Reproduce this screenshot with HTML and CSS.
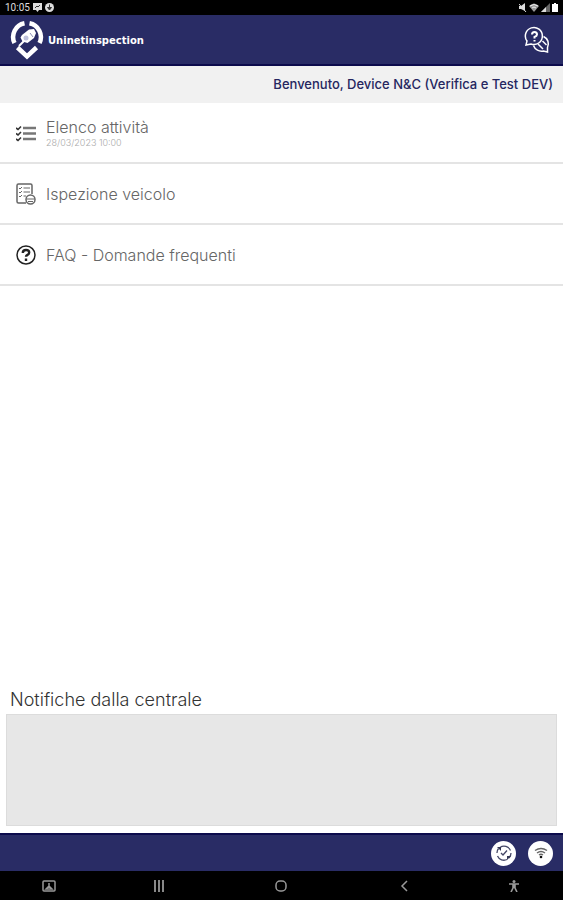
FILE: index.html
```
<!DOCTYPE html>
<html lang="it">
  <head>
    <meta charset="utf-8">
    <meta name="viewport" content="width=device-width,initial-scale=1.0">
    <title>Uninetinspection</title>
    <link rel="stylesheet" href="styles.css">
  </head>
  <body>
    <!-- android status bar -->
    <div class="status-bar">
      <span class="clock">10:05</span>
      <svg width="9" height="9" viewBox="0 0 9 9"><path d="M0 0h9v7H6L4.500 9 3 7H0z" fill="#ddd"/><path d="M2 5l2-2 1 1 2-2" stroke="#333" fill="none"/></svg>
      <svg width="9" height="9" viewBox="0 0 9 9"><circle cx="4.500" cy="4.500" r="4.500" fill="#ddd"/><path d="M4.500 1.500v3M2.500 4.500h4L4.500 7z" stroke="#333" fill="#333"/></svg>
      <div class="status-right">
        <svg width="8" height="9" viewBox="0 0 8 9"><path d="M0 3h2l4-3v8L2 6H0z" fill="#ddd"/><path d="M0 1l7 8" stroke="#ddd"/></svg>
        <svg width="10" height="9" viewBox="0 0 10 9"><path d="M0 3q5-5 10 0L5 9z" fill="#999"/><path d="M1 3q4-3 8 0M3 5q2-2 4 0" stroke="#eee" fill="none"/></svg>
        <svg width="9" height="9" viewBox="0 0 9 9"><path d="M0 9l9-9v9z" fill="#666"/><path d="M0 9l5-5v5z" fill="#ddd"/></svg>
        <svg width="6" height="9" viewBox="0 0 6 9"><path d="M2 0h2v1h2v8H0V1h2z" fill="#fff"/></svg>
      </div>
    </div>

    <header class="app-header">
      <svg class="logo" width="34" height="40" viewBox="0 0 34 40">
        <g fill="none" stroke="#fff" stroke-width="4.500">
          <path d="M14.500 3.200A14 14 0 0 0 4.500 23"/>
          <path d="M19.500 3.200A14 14 0 0 1 29.500 23"/>
          <path d="M7.500 27.500L17 36.500l9.500-9"/>
        </g>
        <path d="M12 15l7-5.500 5-.500 2 4-2 5-6.500 5-5-1.500-2-4z" fill="#fff"/>
        <circle cx="16" cy="18" r="2.500" fill="#bfc2dc"/>
        <path d="M14 21l-5 5" stroke="#fff" stroke-width="2"/>
        <path d="M20 13l3 4" stroke="#8c8fb8"/>
      </svg>
      <h1 class="brand">Uninetinspection</h1>
      <button class="help-btn" aria-label="Aiuto">
        <svg width="28" height="28" viewBox="0 0 28 28" fill="none" stroke="#fff" stroke-width="1.500">
          <path d="M3 19l1-4a8.500 8.500 0 1 1 4 3z"/>
          <path d="M20.500 10.500a8 8 0 0 1 4 11v4.500l-4-1a8.500 8.500 0 0 1-10-5.500"/>
          <path d="M19.500 15l4 4M15 18l5 5"/>
          <path d="M9 8.500q0-2.500 2.500-2.500T14 8.500q0 1.500-2.500 2.500v1.500M11.500 14v1.500" stroke-width="2"/>
        </svg>
      </button>
    </header>

    <p class="welcome">Benvenuto, Device N&amp;C (Verifica e Test DEV)</p>

    <main class="content">
      <nav class="menu">
        <a class="menu-item" href="#attivita">
          <svg width="20" height="20" viewBox="0 0 20 20" fill="none" stroke="#333">
            <path d="M7 5h13M7 10.500h13M7 16h13" stroke="#777" stroke-width="2.400"/>
            <path d="M0 5l2 1.500L5 3.500M0 10.500l2 1.500L5 9M0 16l2 1.500L5 14.500" stroke-width="1.600"/>
          </svg>
          <span class="menu-text">Elenco attività<small class="menu-date">28/03/2023 10:00</small></span>
        </a>
        <a class="menu-item" href="#ispezione">
          <svg width="20" height="22" viewBox="0 0 20 22" fill="none" stroke="#666">
            <path d="M10 20H2.500Q1 20 1 18.500v-16Q1 1 2.500 1h12Q16 1 16 2.500V11" stroke-width="1.500"/>
            <path d="M3 5l1 1 2-2M3 9l1 1 2-2M3 13l1 1 2-2M7.500 5H14M7.500 9H14M7.500 13H10"/>
            <circle cx="14.500" cy="16.500" r="4.500" stroke-width="1.500"/>
            <path d="M10.500 16h8M12 18.500h5"/>
          </svg>
          <span class="menu-text">Ispezione veicolo</span>
        </a>
        <a class="menu-item" href="#faq">
          <svg width="20" height="20" viewBox="0 0 20 20" fill="none" stroke="#222">
            <circle cx="10" cy="10" r="9" stroke-width="1.500"/>
            <path d="M6.800 8q0-3 3.200-3t3.200 2.500q0 1.500-1.700 2.300-1.500.700-1.500 2M10 13.500V16" stroke-width="2.400"/>
          </svg>
          <span class="menu-text">FAQ - Domande frequenti</span>
        </a>
      </nav>

      <section class="notifications">
        <label class="notifications-title" for="notifiche">Notifiche dalla centrale</label>
        <textarea class="notifications-box" id="notifiche" readonly></textarea>
      </section>
    </main>

    <footer class="app-footer">
      <button class="round-btn" aria-label="Sincronizza">
        <svg width="16" height="16" viewBox="0 0 16 16" fill="none" stroke="#444766" stroke-width="1.300">
          <path d="M4 2.500a7 7 0 0 1 10.500 3M15 8a7 7 0 0 1-2 5M11 14.500A7 7 0 0 1 1.500 11M1 8a7 7 0 0 1 1.500-4.500"/>
          <path d="M5 8l2 2 4-4.500"/>
          <path d="M1 2h4v4zM11 11h4l-4 4z" fill="#333654" stroke="none"/>
        </svg>
      </button>
      <button class="round-btn" aria-label="Connessione">
        <svg width="16" height="16" viewBox="0 0 16 16" fill="none" stroke="#666">
          <path d="M2 5.500q6-4 12 0M4 8q4-3 8 0M6 10q2-1.500 4 0" stroke-width="1.500"/>
          <circle cx="8" cy="12" r="1.300" fill="#111" stroke="none"/>
        </svg>
      </button>
    </footer>

    <!-- android navigation -->
    <div class="system-nav">
      <button aria-label="Schermo"><svg width="14" height="12" viewBox="0 0 14 12" fill="none" stroke="#999" stroke-width="1.500"><rect x="1" y="1" width="12" height="10" rx="1"/><path d="M7 3v3M4 9l3-3 3 3z"/></svg></button>
      <button aria-label="Recenti"><svg width="12" height="12" viewBox="0 0 12 12" stroke="#888" stroke-width="2"><path d="M2 0v12M6 0v12M10 0v12"/></svg></button>
      <button aria-label="Home"><svg width="12" height="12" viewBox="0 0 12 12" fill="none" stroke="#999" stroke-width="1.500"><rect x="1" y="1" width="10" height="10" rx="4"/></svg></button>
      <button aria-label="Indietro"><svg width="12" height="12" viewBox="0 0 12 12" fill="none" stroke="#999" stroke-width="1.500"><path d="M9 1L4 6l5 5"/></svg></button>
      <button aria-label="Accessibilità"><svg width="12" height="12" viewBox="0 0 12 12" fill="none" stroke="#999" stroke-width="1.600"><circle cx="6" cy="1.500" r="1.500" fill="#999" stroke="none"/><path d="M1 4h10M6 4v4M5 4v4l-2 4M7 4v4l2 4"/></svg></button>
    </div>
  </body>
</html>
```
FILE: styles.css
```
* { box-sizing: border-box; }

body { margin: 0; min-height: 100vh; display: flex; flex-direction: column; background: #fff; color: #666; font-family: Inter, "Open Sans", sans-serif; }

button { border: none; padding: 0; background: none; display: flex; align-items: center; justify-content: center; }
svg { display: block; flex-shrink: 0; }

.status-bar { display: flex; align-items: center; gap: 3px; height: 15px; padding: 0 5px; background: #000; color: #ddd; font-family: Roboto, sans-serif; font-size: 10px; }
.status-right { display: flex; gap: 2px; margin-left: auto; }

.app-header { display: flex; align-items: center; height: 51px; padding: 0 12px 0 10px; background: #292c65; border-bottom: 2px solid #0c0b4c; }
.brand { margin: 0 auto 0 4px; padding-top: 2px; color: #fff; font-family: "DejaVu Sans", sans-serif; font-size: 10px; font-weight: bold; }

.welcome { margin: 0; padding: 0 10px; background: #f1f1f1; color: #25265f; font-size: 13px; font-weight: 500; line-height: 37px; text-align: right; }

.content { flex: 1; display: flex; flex-direction: column; }

.menu-item { display: flex; align-items: center; gap: 10px; height: 61px; padding: 0 16px; border-bottom: 2px solid #e4e4e4; color: #666; text-decoration: none; }
.menu-text { font-size: 16px; font-weight: 300; line-height: 20px; }
.menu-date { display: block; color: #aaa; font-size: 9px; line-height: 11px; }

.notifications { margin-top: auto; padding: 0 6px 7px; }
.notifications-title { display: block; padding: 0 4px; color: #333; font-size: 18px; font-weight: 300; line-height: 28px; }
.notifications-box { display: block; width: 100%; height: 112px; border: 1px solid #dcdcdc; background: #e7e7e7; resize: none; font: inherit; }

.app-footer { display: flex; align-items: center; justify-content: flex-end; gap: 12px; height: 38px; padding: 0 10px; background: #292c65; border-top: 2px solid #0c0b4c; }
.round-btn { width: 25px; height: 25px; border-radius: 50%; background: #fff; }

.system-nav { display: grid; grid-template-columns: 4fr 5fr 5fr 5fr 4fr; align-items: center; height: 29px; background: #000; }
```
